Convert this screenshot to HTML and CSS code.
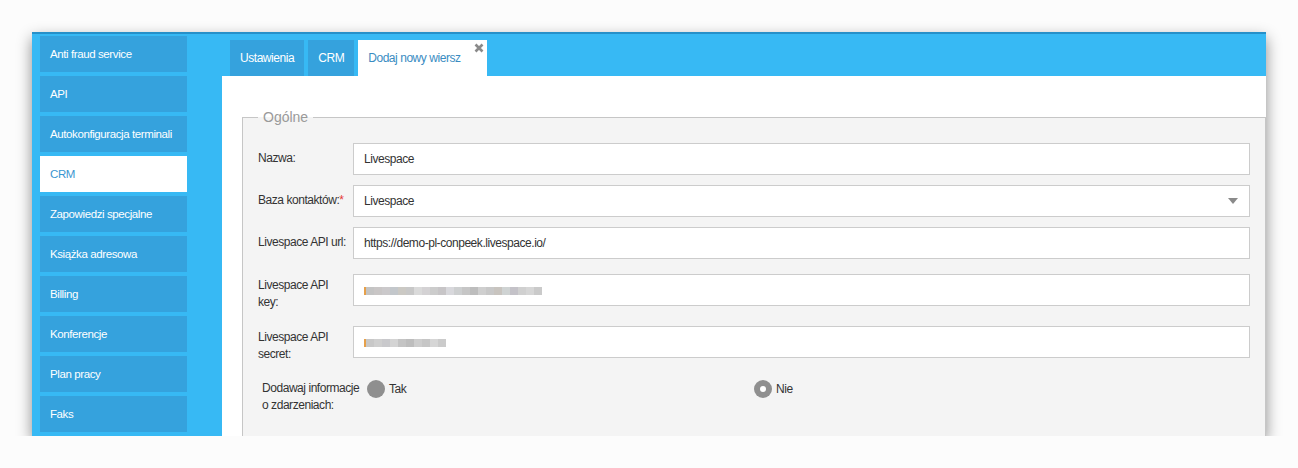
FILE: index.html
```html
<!DOCTYPE html>
<html lang="pl">

<head>
    <meta charset="UTF-8">
    <meta name="viewport" content="width=device-width, initial-scale=1.0">
    <title>CRM - Dodaj nowy wiersz</title>
    <link rel="stylesheet" href="styles.css">
</head>

<body>
    <div class="window">
        <!-- menu po lewej -->
        <div class="side-menu">
            <a class="side-item" href="javascript:;">Anti fraud service</a>
            <a class="side-item" href="javascript:;">API</a>
            <a class="side-item" href="javascript:;">Autokonfiguracja terminali</a>
            <a class="side-item active" href="javascript:;">CRM</a>
            <a class="side-item" href="javascript:;">Zapowiedzi specjalne</a>
            <a class="side-item" href="javascript:;">Książka adresowa</a>
            <a class="side-item" href="javascript:;">Billing</a>
            <a class="side-item" href="javascript:;">Konferencje</a>
            <a class="side-item" href="javascript:;">Plan pracy</a>
            <a class="side-item" href="javascript:;">Faks</a>
        </div>

        <div class="main">
            <div class="tabs">
                <a class="tab" href="javascript:;">Ustawienia</a>
                <a class="tab" href="javascript:;">CRM</a>
                <a class="tab tab-active" href="javascript:;">Dodaj nowy wiersz
                    <svg class="tab-close" width="10" height="10" viewBox="0 0 10 10">
                        <path d="M1.5 1.5 L8.5 8.5 M8.5 1.5 L1.5 8.5" stroke="#8a8a8a" stroke-width="2.6" stroke-linecap="butt" />
                    </svg>
                </a>
            </div>

            <div class="content">
                <fieldset class="group">
                    <legend>Ogólne</legend>

                    <div class="row">
                        <label class="row-label">Nazwa:</label>
                        <div class="field">Livespace</div>
                    </div>
                    <div class="row">
                        <label class="row-label">Baza kontaktów:<span class="req">*</span></label>
                        <div class="field field-select">Livespace<span class="arrow"></span></div>
                    </div>
                    <div class="row">
                        <label class="row-label">Livespace API url:</label>
                        <div class="field">https://demo-pl-conpeek.livespace.io/</div>
                    </div>
                    <div class="row row-tall">
                        <label class="row-label">Livespace API key:</label>
                        <div class="field">
                            <div class="blur" id="blurKey"></div>
                        </div>
                    </div>
                    <div class="row row-tall">
                        <label class="row-label">Livespace API secret:</label>
                        <div class="field">
                            <div class="blur" id="blurSecret"></div>
                        </div>
                    </div>

                    <div class="row-radio">
                        <div class="radio-label">Dodawaj informacje o zdarzeniach:</div>
                        <div class="radio-opt radio-first">
                            <span class="radio"></span>Tak
                        </div>
                        <div class="radio-opt">
                            <span class="radio radio-on"></span>Nie
                        </div>
                    </div>
                </fieldset>
            </div>
        </div>
    </div>

    <script>
        // zamazane pola (klucz i secret)
        var keyColors = ['#c4c4c4', '#c9c6c6', '#cbc9cb', '#c3c7cb', '#cbc9c4', '#c8c8c8', '#dadada', '#d4d2d4',
            '#cccccc', '#c7c5c7', '#d8d8dc', '#cdcfd0', '#c6c6c6', '#bdbdbd', '#cfcfcf', '#c8c8c8', '#c8c4bf',
            '#cfd3d3', '#c4c2c8', '#d0d0d0', '#d6d6d6', '#cacaca'
        ];
        var secretColors = ['#c8c8c8', '#cfcfcf', '#c9c9cc', '#d4d4d4', '#c4c4c4', '#bdbdbd', '#cdcdcd', '#c6c6c6', '#d6d6d6', '#cbcbcb'];

        function fill(id, colors) {
            var box = document.getElementById(id);
            colors.forEach(function(c) {
                var s = document.createElement('span');
                s.style.backgroundColor = c;
                box.appendChild(s);
            });
        }
        fill('blurKey', keyColors);
        fill('blurSecret', secretColors);
    </script>
</body>

</html>
```

FILE: styles.css
```css
* {
    margin: 0;
    padding: 0;
    box-sizing: border-box;
}

body {
    background-color: #fcfcfc;
    font-family: "Liberation Sans", Arial, sans-serif;
    font-size: 12px;
    letter-spacing: -0.45px;
    color: #333333;
}

a {
    text-decoration: none;
    color: #ffffff;
}

.window {
    margin: 32px 0 0 32px;
    width: 1234px;
    height: 404px;
    display: flex;
    overflow: hidden;
    background-color: #37b9f4;
    border-top: 2px solid #2690c9;
    box-shadow: 0px 6px 14px rgba(0, 0, 0, .45);
}

/* menu */
.side-menu {
    width: 190px;
    flex-shrink: 0;
    padding: 2px 0 0 8px;
    display: flex;
    flex-direction: column;
    gap: 4px;
}

.side-item {
    display: block;
    width: 147px;
    height: 36px;
    line-height: 36px;
    padding-left: 10px;
    background-color: #35a2dd;
    color: #ffffff;
    font-size: 11.5px;
    letter-spacing: -0.4px;
    white-space: nowrap;
}

.side-item.active {
    background-color: #ffffff;
    color: #3a96d0;
}

.main {
    flex: 1;
    display: flex;
    flex-direction: column;
}

/* zakladki */
.tabs {
    height: 42px;
    padding: 6px 0 0 8px;
    display: flex;
    gap: 4px;
}

.tab {
    position: relative;
    height: 36px;
    line-height: 36px;
    padding: 0 10px;
    background-color: #35a2dd;
    color: #ffffff;
}

.tab-active {
    background-color: #ffffff;
    color: #3a8cc2;
    padding-right: 26px;
}

.tab-close {
    position: absolute;
    top: 3px;
    right: 3px;
}

.content {
    flex: 1;
    background-color: #ffffff;
    padding: 33px 0 0 20px;
}

.group {
    border: 1px solid #c6c6c6;
    background-color: #f4f4f4;
    padding: 18px 15px 30px 15px;
}

.group legend {
    padding: 0 5px;
    font-size: 14px;
    line-height: 16px;
    letter-spacing: 0;
    color: #9a9a9a;
}

/* wiersze formularza */
.row {
    display: flex;
    align-items: flex-start;
    margin-bottom: 10px;
}

.row-tall {
    padding-top: 5px;
}

.row-label {
    width: 95px;
    flex-shrink: 0;
    padding-top: 7px;
    line-height: 17px;
}

.row-tall .row-label {
    padding-top: 3px;
    padding-right: 12px;
}

.req {
    color: #e53935;
}

.field {
    flex: 1;
    height: 32px;
    line-height: 30px;
    padding: 0 11px 0 10px;
    border: 1px solid #cccccc;
    background-color: #ffffff;
    display: flex;
    align-items: center;
}

.field-select {
    justify-content: space-between;
}

.arrow {
    width: 0;
    height: 0;
    border-left: 5px solid transparent;
    border-right: 5px solid transparent;
    border-top: 6px solid #8a8a8a;
}

.blur {
    display: flex;
    height: 8px;
    margin-top: 2px;
    border-left: 2px solid #e6a04a;
}

.blur span {
    width: 8px;
    height: 8px;
}

/* radio */
.row-radio {
    display: flex;
    align-items: flex-start;
    padding: 7px 0 0 4px;
}

.radio-label {
    width: 105px;
    line-height: 17px;
}

.radio-opt {
    display: flex;
    align-items: center;
    gap: 4px;
    line-height: 17px;
}

.radio-first {
    width: 387px;
}

.radio {
    width: 18px;
    height: 18px;
    border-radius: 50%;
    background-color: #8f8f8f;
    position: relative;
}

.radio-on::after {
    content: "";
    position: absolute;
    left: 6px;
    top: 6px;
    width: 6px;
    height: 6px;
    border-radius: 50%;
    background-color: #ffffff;
}
```
